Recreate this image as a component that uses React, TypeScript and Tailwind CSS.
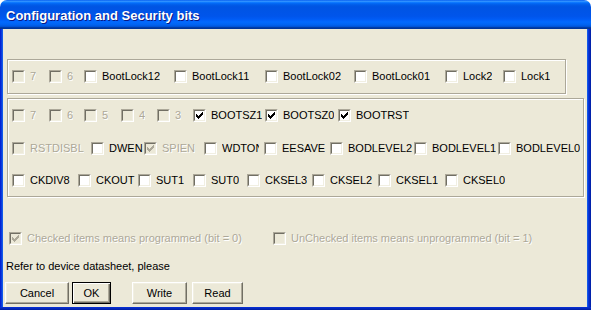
import React from "react";

type Item = { w: string; label: string; checked?: boolean; disabled?: boolean; clip?: string };

const CHECK = "M6 0h1v1h-1z M5 1h2v1h-2z M0 2h1v1h-1z M4 2h3v1h-3z M0 3h2v1h-2z M3 3h3v1h-3z M0 4h5v1h-5z M1 5h3v1h-3z M2 6h1v1h-1z";

function Box({ checked, disabled }: { checked?: boolean; disabled?: boolean }) {
  return (
    <span
      className={`relative block w-[13px] h-[13px] shrink-0 border border-t-[#aca899] border-l-[#aca899] border-r-white border-b-white ${
        disabled ? "bg-[#ece9d8]" : "bg-white"
      }`}
    >
      <span className="absolute inset-0 border border-t-[#716f64] border-l-[#716f64] border-r-[#f1efe2] border-b-[#f1efe2]" />
      {checked && (
        <svg
          className="absolute left-[2px] top-[2px]"
          width="7"
          height="7"
          viewBox="0 0 7 7"
          shapeRendering="crispEdges"
        >
          <path d={CHECK} fill={disabled ? "#aca899" : "#000"} />
        </svg>
      )}
    </span>
  );
}

function Check({ item }: { item: Item }) {
  return (
    <div className={`flex items-center h-[13px] shrink-0 ${item.w}`}>
      <Box checked={item.checked} disabled={item.disabled} />
      <span
        className={`ml-[5px] text-[11px] leading-[13px] whitespace-nowrap overflow-hidden ${item.clip ?? ""} ${
          item.disabled ? "text-[#aca899] [text-shadow:1px_1px_0_#fff]" : "text-black"
        }`}
      >
        {item.label}
      </span>
    </div>
  );
}

const row1: Item[] = [
  { w: "w-[37px]", label: "7", disabled: true },
  { w: "w-[35px]", label: "6", disabled: true },
  { w: "w-[90px]", label: "BootLock12" },
  { w: "w-[91px]", label: "BootLock11" },
  { w: "w-[89px]", label: "BootLock02" },
  { w: "w-[91px]", label: "BootLock01" },
  { w: "w-[58px]", label: "Lock2" },
  { w: "w-[54px]", label: "Lock1" },
];

const row2: Item[] = [
  { w: "w-[37px]", label: "7", disabled: true },
  { w: "w-[35px]", label: "6", disabled: true },
  { w: "w-[37px]", label: "5", disabled: true },
  { w: "w-[36px]", label: "4", disabled: true },
  { w: "w-[36px]", label: "3", disabled: true },
  { w: "w-[72px]", label: "BOOTSZ1", checked: true },
  { w: "w-[73px]", label: "BOOTSZ0", checked: true },
  { w: "w-[90px]", label: "BOOTRST", checked: true },
];

const row3: Item[] = [
  { w: "w-[79px]", label: "RSTDISBL", disabled: true },
  { w: "w-[53px]", label: "DWEN" },
  { w: "w-[60px]", label: "SPIEN", checked: true, disabled: true },
  { w: "w-[60px]", label: "WDTON", clip: "max-w-[37px]" },
  { w: "w-[66px]", label: "EESAVE" },
  { w: "w-[84px]", label: "BODLEVEL2" },
  { w: "w-[84px]", label: "BODLEVEL1" },
  { w: "w-[84px]", label: "BODLEVEL0" },
];

const row4: Item[] = [
  { w: "w-[66px]", label: "CKDIV8" },
  { w: "w-[60px]", label: "CKOUT" },
  { w: "w-[55px]", label: "SUT1" },
  { w: "w-[54px]", label: "SUT0" },
  { w: "w-[65px]", label: "CKSEL3" },
  { w: "w-[66px]", label: "CKSEL2" },
  { w: "w-[67px]", label: "CKSEL1" },
  { w: "w-[70px]", label: "CKSEL0" },
];

function Row({ items, className = "" }: { items: Item[]; className?: string }) {
  return (
    <div className={`flex items-center h-[13px] ${className}`}>
      {items.map((it, i) => (
        <Check key={i} item={it} />
      ))}
    </div>
  );
}

const btnBase =
  "h-[22px] bg-[#ece9d8] text-[11px] leading-[13px] text-black flex items-center justify-center shrink-0";
const btnNormal =
  "border border-t-white border-l-white border-r-[#716f64] border-b-[#716f64] shadow-[inset_-1px_-1px_0_#aca899,inset_1px_1px_0_#f1efe2]";
const btnDefault =
  "border border-black shadow-[inset_1px_1px_0_#fff,inset_-1px_-1px_0_#716f64,inset_-2px_-2px_0_#aca899]";

export default function App() {
  return (
    <div className="w-[591px] h-[310px] flex flex-col bg-white font-['Liberation_Sans',Arial,sans-serif] overflow-hidden">
      {/* Title bar */}
      <div className="h-[29px] shrink-0 rounded-t-[7px] bg-[linear-gradient(to_bottom,#0058ee_0%,#3593ff_4%,#288eff_6%,#127dff_8%,#036ffc_10%,#0262ee_14%,#0057e5_20%,#0054e3_24%,#0055eb_56%,#005bf5_66%,#026afe_76%,#0062ef_86%,#0052d6_92%,#0040ab_94%,#003092_100%)] flex items-center pl-[6px] pt-[3px]">
        <span className="text-white font-bold text-[13px] leading-[16px] [text-shadow:1px_1px_0_#0a1883] whitespace-nowrap">
          Configuration and Security bits
        </span>
      </div>

      {/* Body with frame */}
      <div className="flex flex-1 min-h-0">
        <div className="w-[3px] shrink-0 bg-[linear-gradient(to_right,#0019cf,#0831d9_40%,#166aee)]" />
        <div className="flex-1 bg-[#ece9d8] flex flex-col">
          {/* Group 1 */}
          <div className="mt-[30px] ml-[4px] w-[559px] h-[35px] border border-[#aca899] shadow-[inset_1px_1px_0_#fff,1px_1px_0_#fff] flex items-center pl-[4px]">
            <Row items={row1} />
          </div>

          {/* Group 2 */}
          <div className="mt-[4px] ml-[4px] w-[577px] h-[99px] border border-[#aca899] shadow-[inset_1px_1px_0_#fff,1px_1px_0_#fff] flex flex-col pl-[4px] pt-[10px]">
            <Row items={row2} />
            <Row items={row3} className="mt-[20px]" />
            <Row items={row4} className="mt-[19px]" />
          </div>

          {/* Legend */}
          <div className="mt-[35px] ml-[6px] flex items-center h-[13px]">
            <Check item={{ w: "w-[264px]", label: "Checked items means programmed (bit = 0)", checked: true, disabled: true }} />
            <Check item={{ w: "w-[300px]", label: "UnChecked items means unprogrammed (bit = 1)", disabled: true }} />
          </div>

          <div className="mt-[15px] ml-[3px] h-[13px] text-[11px] leading-[13px] text-black whitespace-nowrap">
            Refer to device datasheet, please
          </div>

          {/* Buttons */}
          <div className="mt-[9px] ml-[2px] flex h-[22px]">
            <button className={`${btnBase} ${btnNormal} w-[64px]`}>Cancel</button>
            <button className={`${btnBase} ${btnDefault} w-[39px] ml-[3px]`}>OK</button>
            <button className={`${btnBase} ${btnNormal} w-[55px] ml-[21px]`}>Write</button>
            <button className={`${btnBase} ${btnNormal} w-[51px] ml-[5px]`}>Read</button>
          </div>
        </div>
        <div className="w-[4px] shrink-0 bg-[linear-gradient(to_right,#166aee,#0831d9_40%,#001ea0)]" />
      </div>
      <div className="h-[3px] shrink-0 bg-[linear-gradient(to_bottom,#0831d9,#001ea0)]" />
    </div>
  );
}
